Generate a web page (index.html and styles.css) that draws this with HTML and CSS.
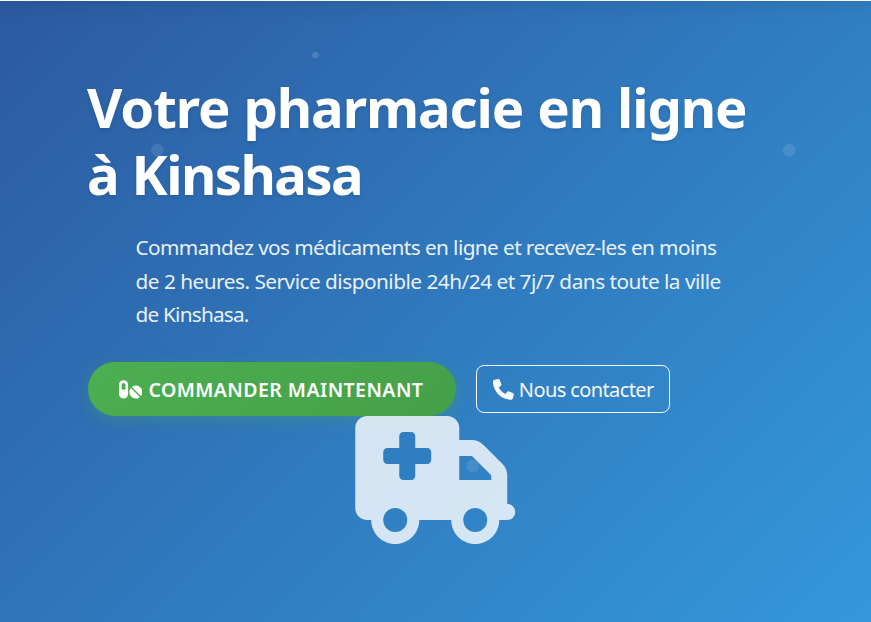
FILE: index.html
```html
<!DOCTYPE html>
<html lang="fr">
<head>
<meta charset="utf-8">
<title>Pharmacie en ligne</title>
<link rel="stylesheet" href="styles.css">
</head>
<body>
<header class="topbar"></header>
<section class="hero">
  <svg class="dots" viewBox="0 0 871 621" aria-hidden="true">
    <circle cx="157.3" cy="149" r="6.4"/>
    <circle cx="789.2" cy="149" r="6.4"/>
    <circle cx="472.8" cy="465" r="6.4"/>
    <circle class="small" cx="315.5" cy="54" r="3.3"/>
    <circle class="small" cx="568" cy="244" r="3.3"/>
  </svg>
  <div class="container">
    <h1><span class="t1">Votre pharmacie en ligne</span><span class="t2">à Kinshasa</span></h1>
    <p class="lead"><span class="l1">Commandez vos médicaments en ligne et recevez-les en moins</span><span class="l2">de 2 heures. Service disponible 24h/24 et 7j/7 dans toute la ville</span><span class="l3">de Kinshasa.</span></p>
    <div class="actions">
      <a class="btn primary">
        <svg class="pills" viewBox="0 0 576 512"><path d="M112 96c-26.5 0-48 21.5-48 48V256h96V144c0-26.5-21.5-48-48-48zM0 144C0 82.1 50.1 32 112 32s112 50.1 112 112V368c0 61.9-50.1 112-112 112S0 429.9 0 368V144zM554.9 399.4c-7.1 12.3-23.7 13.1-33.8 3.1L333.5 214.9c-10-10-9.3-26.7 3.1-33.8C360 167.7 387.1 160 416 160c88.4 0 160 71.6 160 160c0 28.9-7.7 56-21.1 79.4zm-59.5 59.5C472 472.3 444.9 480 416 480c-88.4 0-160-71.6-160-160c0-28.9 7.7-56 21.1-79.4c7.1-12.3 23.7-13.1 33.8-3.1L498.5 425.1c10 10 9.3 26.7-3.1 33.8z"/></svg>
        <span>COMMANDER MAINTENANT</span>
      </a>
      <a class="btn outline">
        <svg class="phone" viewBox="0 0 512 512"><path d="M164.900 24.600c-7.700-18.600-28-28.500-47.400-23.200l-88 24C12.100 30.200 0 46 0 64C0 311.400 200.600 512 448 512c18 0 33.800-12.100 38.600-29.500l24-88c5.300-19.400-4.600-39.700-23.200-47.400l-96-40c-16.300-6.800-35.200-2.100-46.300 11.600L304.700 368C234.300 334.700 177.300 277.700 144 207.300L193.300 167c13.700-11.200 18.400-30 11.600-46.300l-40-96z"/></svg>
        <span>Nous contacter</span>
      </a>
    </div>
    <svg class="truck" viewBox="-1 0 640 512"><path d="M0 48C0 21.500 21.500 0 48 0H368c26.500 0 48 21.500 48 48V96h50.700c17 0 33.300 6.700 45.300 18.700L589.300 192c12 12 18.700 28.300 18.700 45.300V256v32 64c17.700 0 32 14.300 32 32s-14.300 32-32 32H576c0 53-43 96-96 96s-96-43-96-96H256c0 53-43 96-96 96s-96-43-96-96H48c-26.500 0-48-21.500-48-48V48zM416 256H544V237.300L466.700 160H416v96zM160 464a48 48 0 1 0 0-96 48 48 0 1 0 0 96zm368-48a48 48 0 1 0 -96 0 48 48 0 1 0 96 0zM176 80v48l-48 0c-8.800 0-16 7.200-16 16v32c0 8.800 7.200 16 16 16h48v48c0 8.800 7.200 16 16 16h32c8.800 0 16-7.200 16-16V192h48c8.800 0 16-7.200 16-16V144c0-8.800-7.200-16-16-16H240V80c0-8.800-7.200-16-16-16H192c-8.800 0-16 7.200-16 16z"/></svg>
  </div>
</section>
</body>
</html>
```
FILE: styles.css
```css
* { box-sizing: border-box; }
body {
  margin: 0;
  height: 622px;
  overflow: hidden;
  font-family: "Noto Sans", "Open Sans", sans-serif;
  color: #fff;
}
.topbar {
  height: 1px;
  background: #f5f8f5;
  position: relative;
  z-index: 2;
}
.topbar::after {
  content: "";
  position: absolute;
  left: 0;
  right: 0;
  bottom: 0;
  height: 70px;
  box-shadow: 0 2px 20px rgba(0, 0, 0, .1);
}
.hero {
  position: relative;
  height: 621px;
  padding-top: 73px;
  background: linear-gradient(135deg, #2c5aa0 0%, #3498db 100%);
}
.dots {
  position: absolute;
  inset: 0;
  width: 871px;
  height: 621px;
  fill: rgba(255, 255, 255, .1);
}
.dots .small { fill: rgba(255, 255, 255, .15); }
.container {
  position: relative;
  width: 695px;
  margin: 0 auto;
}
h1 {
  margin: 0 0 23px -1px;
  font-size: 54.5px;
  line-height: 67.2px;
  font-weight: 700;
  white-space: nowrap;
  text-shadow: 0 2px 4px rgba(0, 0, 0, .1);
}
h1 span, .lead span { display: block; }
.t1 { letter-spacing: -1.1px; word-spacing: 1px; }
.t2 { letter-spacing: -1.6px; word-spacing: 1px; }
.lead {
  width: 600px;
  margin: 0 auto 31px;
  font-size: 20.8px;
  line-height: 33.3px;
  white-space: nowrap;
  opacity: .9;
}
.l1 { letter-spacing: -.6px; }
.l2 { letter-spacing: -.51px; }
.l3 { letter-spacing: -.8px; }
.actions {
  display: flex;
  align-items: center;
  gap: 20px;
}
.btn {
  display: flex;
  align-items: center;
  white-space: nowrap;
}
.btn svg { fill: currentColor; flex: none; }
.primary {
  width: 368px;
  height: 54px;
  padding-left: 31px;
  gap: 6px;
  border-radius: 27px;
  font-size: 19.5px;
  font-weight: 600;
  letter-spacing: .45px;
  background: linear-gradient(135deg, #4caf50, #45a049);
  box-shadow: 0 4px 15px rgba(76, 175, 80, .3);
}
.pills { width: 23.4px; height: 20.8px; }
.outline {
  width: 194px;
  height: 48px;
  padding-left: 16px;
  gap: 5px;
  border: 1px solid #f8f9fa;
  border-radius: 8px;
  font-size: 20px;
  letter-spacing: -.6px;
  color: #f8f9fa;
}
.phone { width: 20.8px; height: 20.8px; }
.truck {
  display: block;
  overflow: visible;
  width: 160px;
  height: 128px;
  margin: 0 0 0 267px;
  fill: #fff;
  opacity: .8;
}
```
